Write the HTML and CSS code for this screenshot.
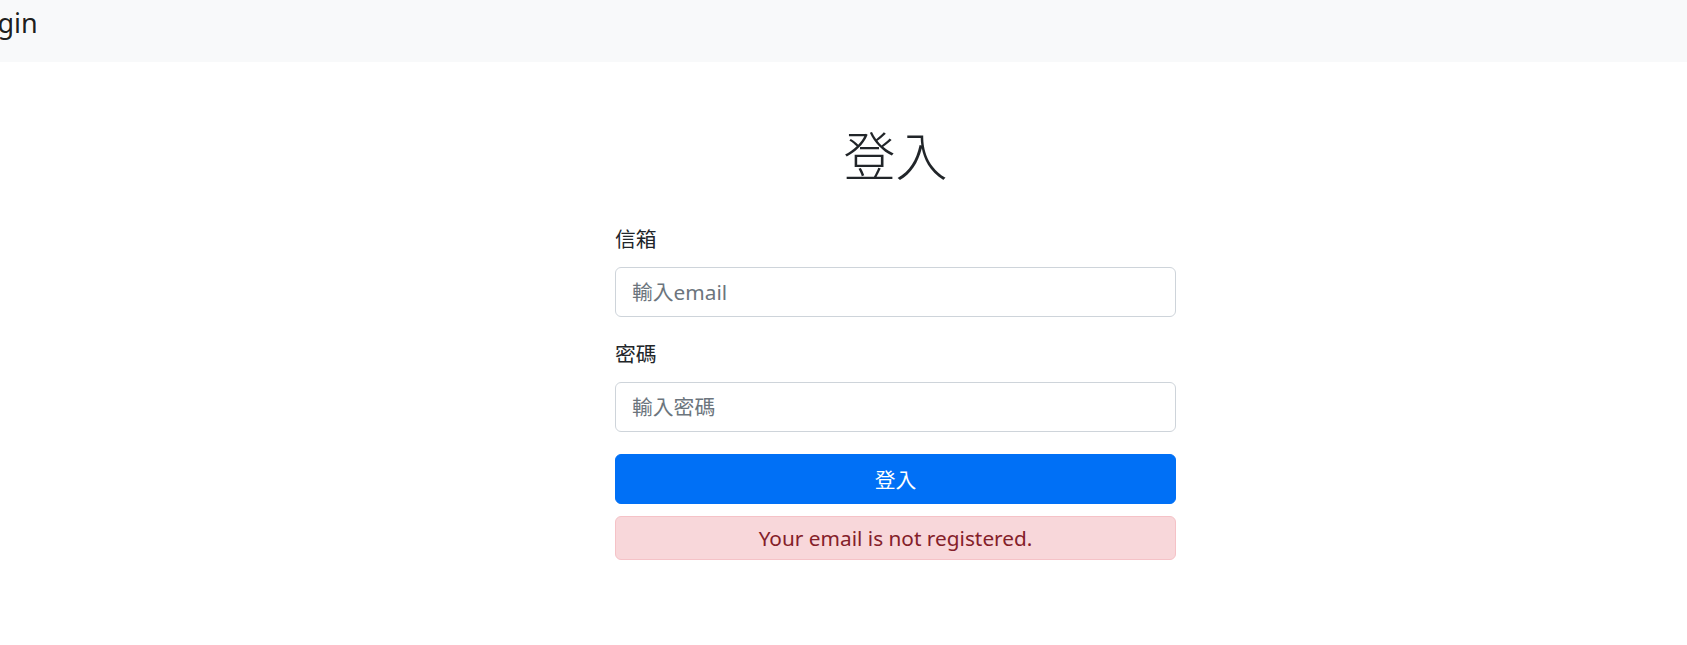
FILE: index.html
```html
<!DOCTYPE html>
<html lang="zh-Hant">
<head>
<meta charset="utf-8">
<title>Login</title>
<link rel="stylesheet" href="styles.css">
</head>
<body>
<nav class="navbar">
  <a class="brand" href="#">Login</a>
</nav>
<main class="page">
  <section class="login">
    <h1 class="title">登入</h1>
    <form class="form">
      <div class="field">
        <label class="label" for="email">信箱</label>
        <input class="input" id="email" type="email" placeholder="輸入email">
      </div>
      <div class="field">
        <label class="label" for="password">密碼</label>
        <input class="input" id="password" type="password" placeholder="輸入密碼">
      </div>
      <button class="btn" type="button">登入</button>
      <div class="alert">Your email is not registered.</div>
    </form>
  </section>
</main>
</body>
</html>
```

FILE: styles.css
```css
* {
  box-sizing: border-box;
}

body {
  margin: 0;
  font-family: "Noto Sans", "Noto Sans CJK TC", sans-serif;
  font-size: 20.8px;
  color: #212529;
  background: #ffffff;
}

.navbar {
  height: 62px;
  padding-bottom: 16px;
  background: #f8f9fa;
  display: flex;
  align-items: center;
  overflow: hidden;
}

.brand {
  margin-left: -33px;
  font-size: 27px;
  line-height: 1.5;
  color: rgba(0, 0, 0, 0.9);
  text-decoration: none;
}

.page {
  display: flex;
  justify-content: center;
  padding-left: 104px;
  padding-top: 63px;
}

.login {
  width: 561px;
}

.title {
  margin: 0 0 37px;
  font-size: 52px;
  font-weight: 300;
  line-height: 62px;
  text-align: center;
}

.form {
  display: flex;
  flex-direction: column;
}

.field {
  display: flex;
  flex-direction: column;
  margin-bottom: 22px;
}

.label {
  line-height: 31px;
  margin-bottom: 12px;
}

.input {
  height: 50px;
  padding: 0 16px;
  font: inherit;
  color: #212529;
  border: 1px solid #ced4da;
  border-radius: 6px;
  background: #ffffff;
}

.input::placeholder {
  color: #6c757d;
}

.btn {
  height: 50px;
  font: inherit;
  color: #ffffff;
  background: #0070f6;
  border: 1px solid #0070f6;
  border-radius: 6px;
}

.alert {
  margin-top: 12px;
  height: 44px;
  line-height: 42px;
  text-align: center;
  color: #842029;
  background: #f8d7da;
  border: 1px solid #f5c2c7;
  border-radius: 6px;
}
```
